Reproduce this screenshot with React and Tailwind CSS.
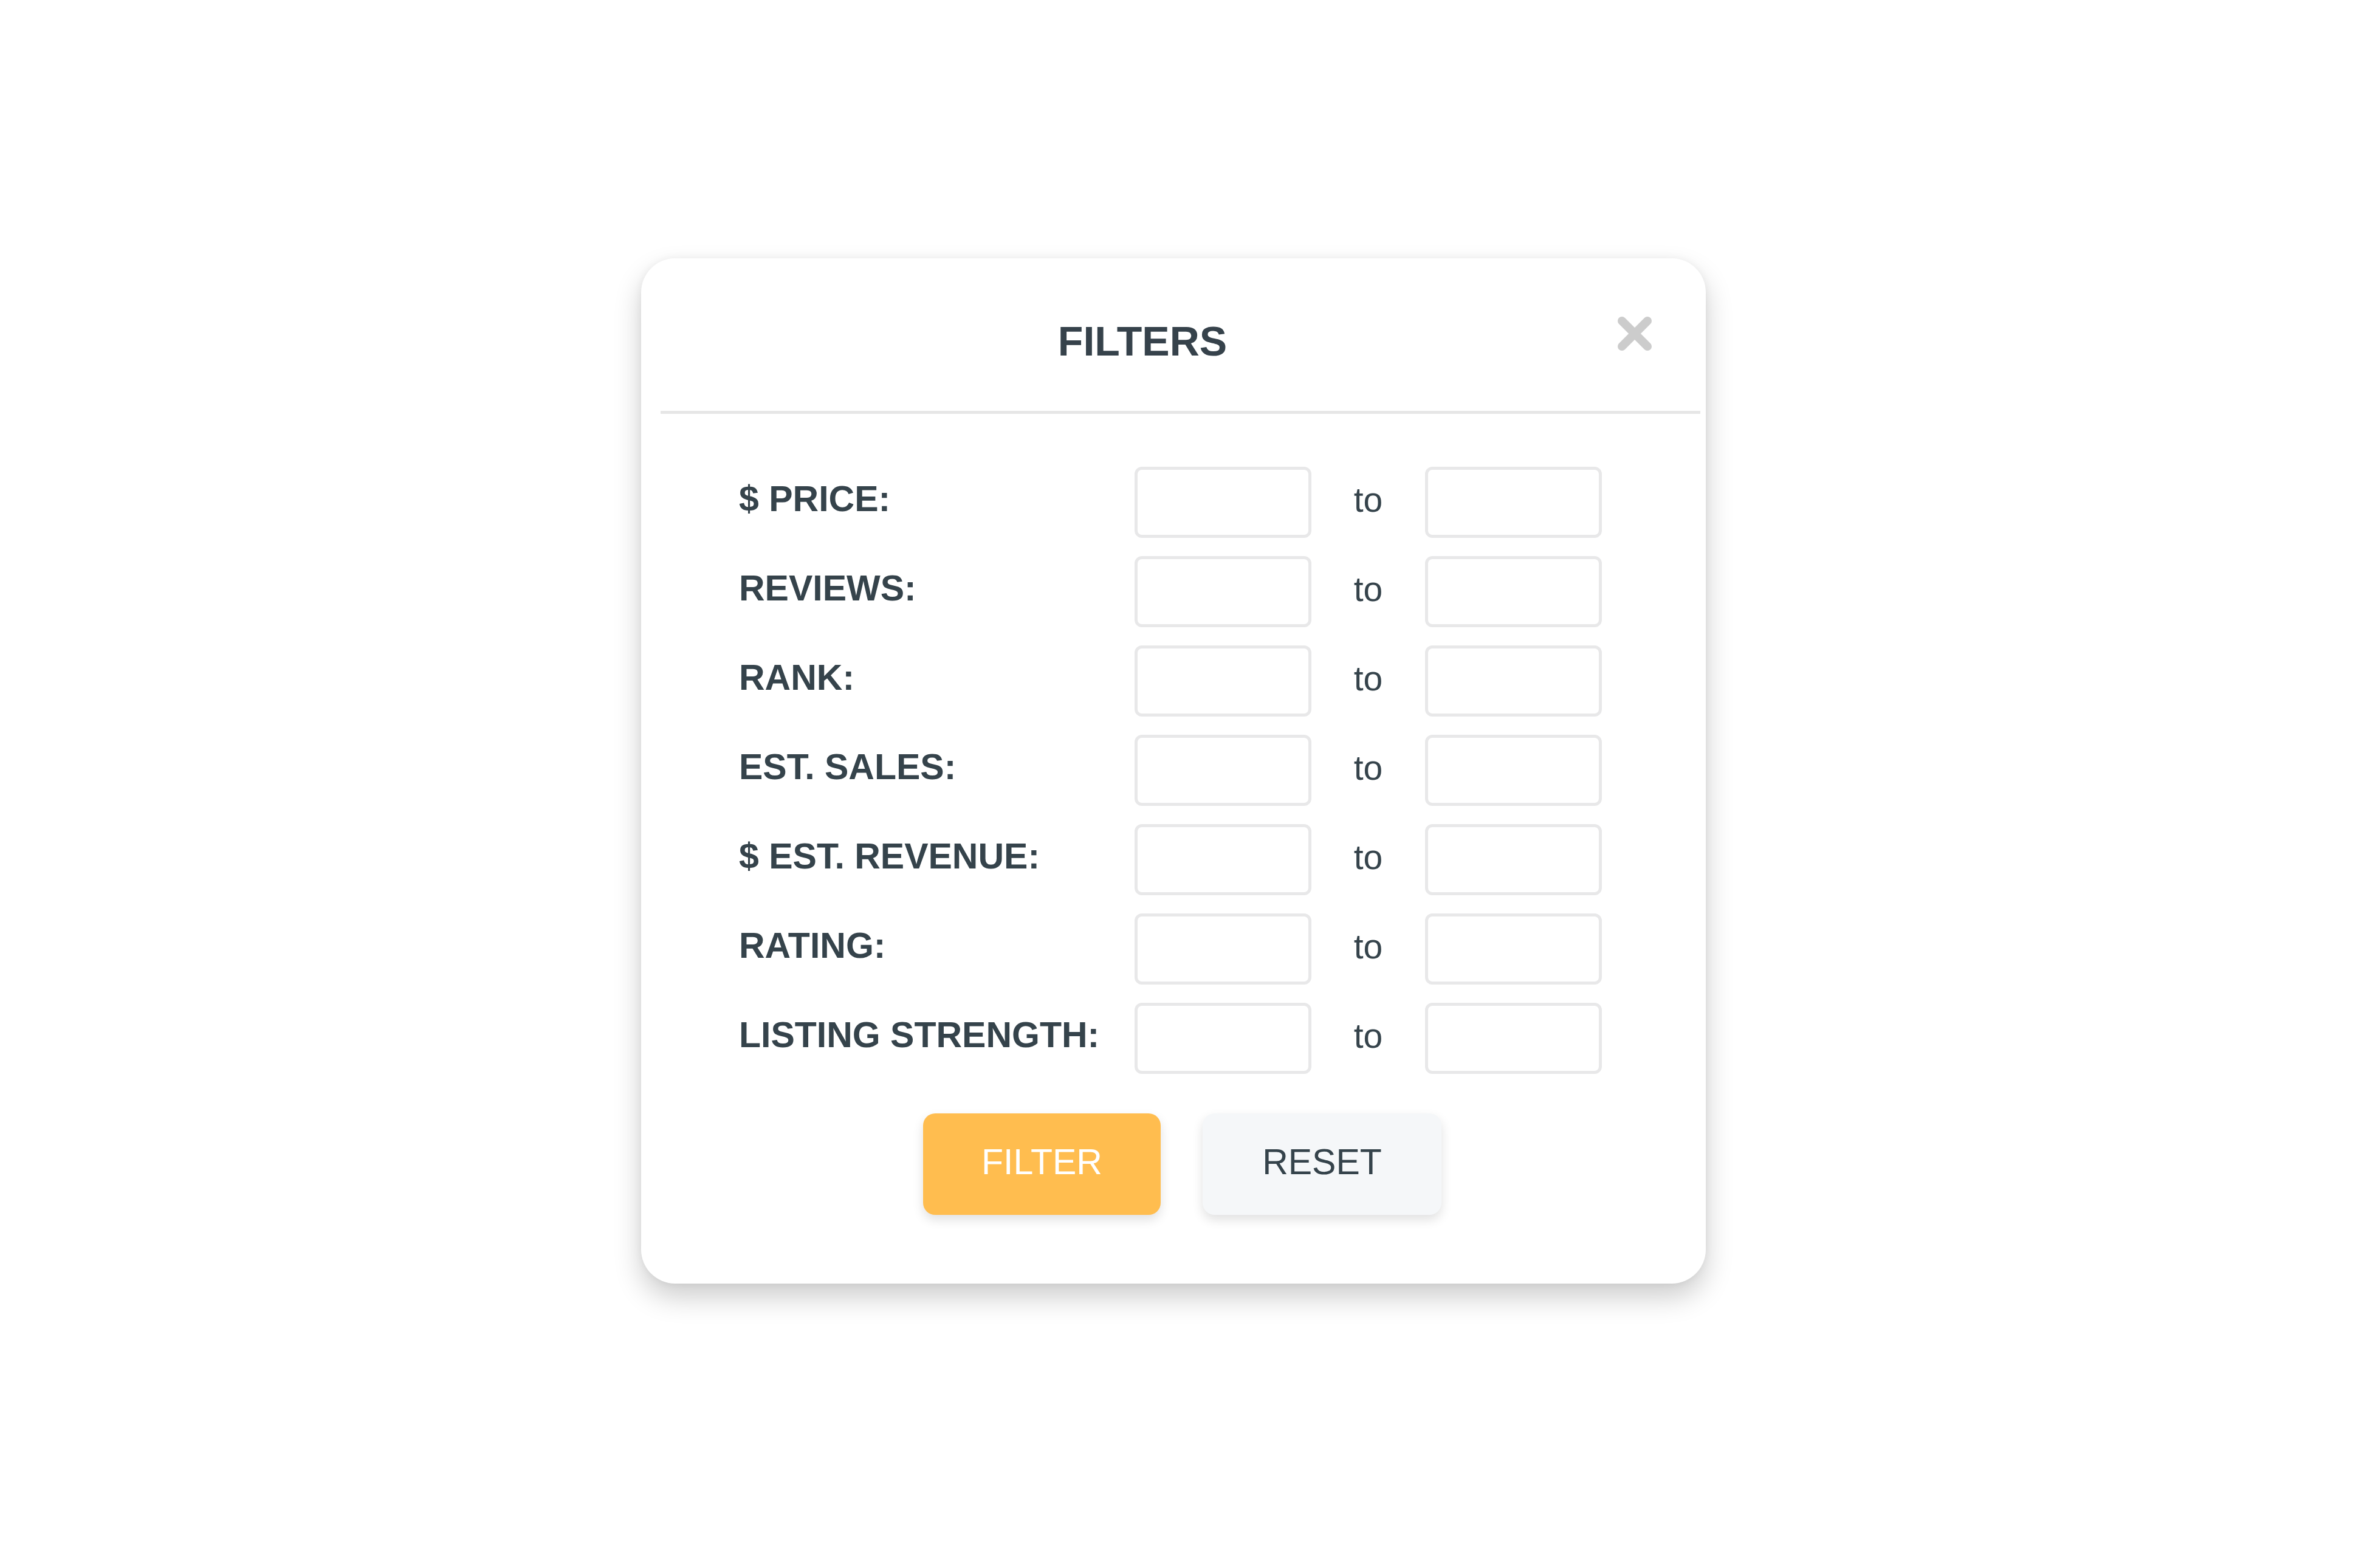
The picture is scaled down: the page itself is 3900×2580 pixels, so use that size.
import React from "react";

const rows = [
  "$ PRICE:",
  "REVIEWS:",
  "RANK:",
  "EST. SALES:",
  "$ EST. REVENUE:",
  "RATING:",
  "LISTING STRENGTH:",
];

function Input() {
  return (
    <input
      type="text"
      className="w-[291px] h-[117px] border-[5px] border-[#e8e8e9] rounded-[12px] bg-white outline-none"
    />
  );
}

export default function App() {
  return (
    <div
      className="min-h-screen bg-white pt-[425px] pl-[1055px] pb-[400px]"
      style={{ fontFamily: '"Liberation Sans", Arial, sans-serif' }}
    >
      <div className="relative w-[1752px] h-[1687px] bg-white rounded-[56px] shadow-[0_22px_46px_rgba(0,0,0,0.2),0_0_14px_rgba(0,0,0,0.05)] flex flex-col">
        <div className="h-[251px] flex items-center">
          <div className="w-[1650px] text-center text-[68px] font-bold text-[#36424b] pt-[20px] leading-none">
            FILTERS
          </div>
        </div>
        <button className="absolute left-[1606px] top-[95px] w-[58px] h-[58px] flex items-center justify-center">
          <svg width="56" height="56" viewBox="0 0 56 56">
            <path
              d="M7 7 L49 49 M49 7 L7 49"
              stroke="#cccccc"
              strokeWidth="14"
              strokeLinecap="round"
            />
          </svg>
        </button>
        <div className="ml-[32px] mr-[9px] h-[5px] bg-[#e6e6e6]" />
        <div className="mt-[87px] pl-[161px] flex flex-col gap-[30px]">
          {rows.map((r) => (
            <div key={r} className="flex items-center h-[117px]">
              <div className="w-[651px] text-[59px] font-bold text-[#35434b] leading-none pb-[10px]">
                {r}
              </div>
              <Input />
              <div className="w-[187px] text-center text-[57px] text-[#35434b] leading-none pb-[8px]">
                to
              </div>
              <Input />
            </div>
          ))}
        </div>
        <div className="mt-[65px] pl-[464px] flex gap-[69px]">
          <button className="w-[391px] h-[167px] rounded-[20px] bg-[#ffbd4f] text-white text-[59px] leading-none pb-[6px] shadow-[0_8px_18px_rgba(0,0,0,0.12)]">
            FILTER
          </button>
          <button className="w-[393px] h-[167px] rounded-[20px] bg-[#f5f7f9] text-[#35434b] text-[59px] leading-none pb-[6px] shadow-[0_8px_18px_rgba(0,0,0,0.12)]">
            RESET
          </button>
        </div>
      </div>
    </div>
  );
}
